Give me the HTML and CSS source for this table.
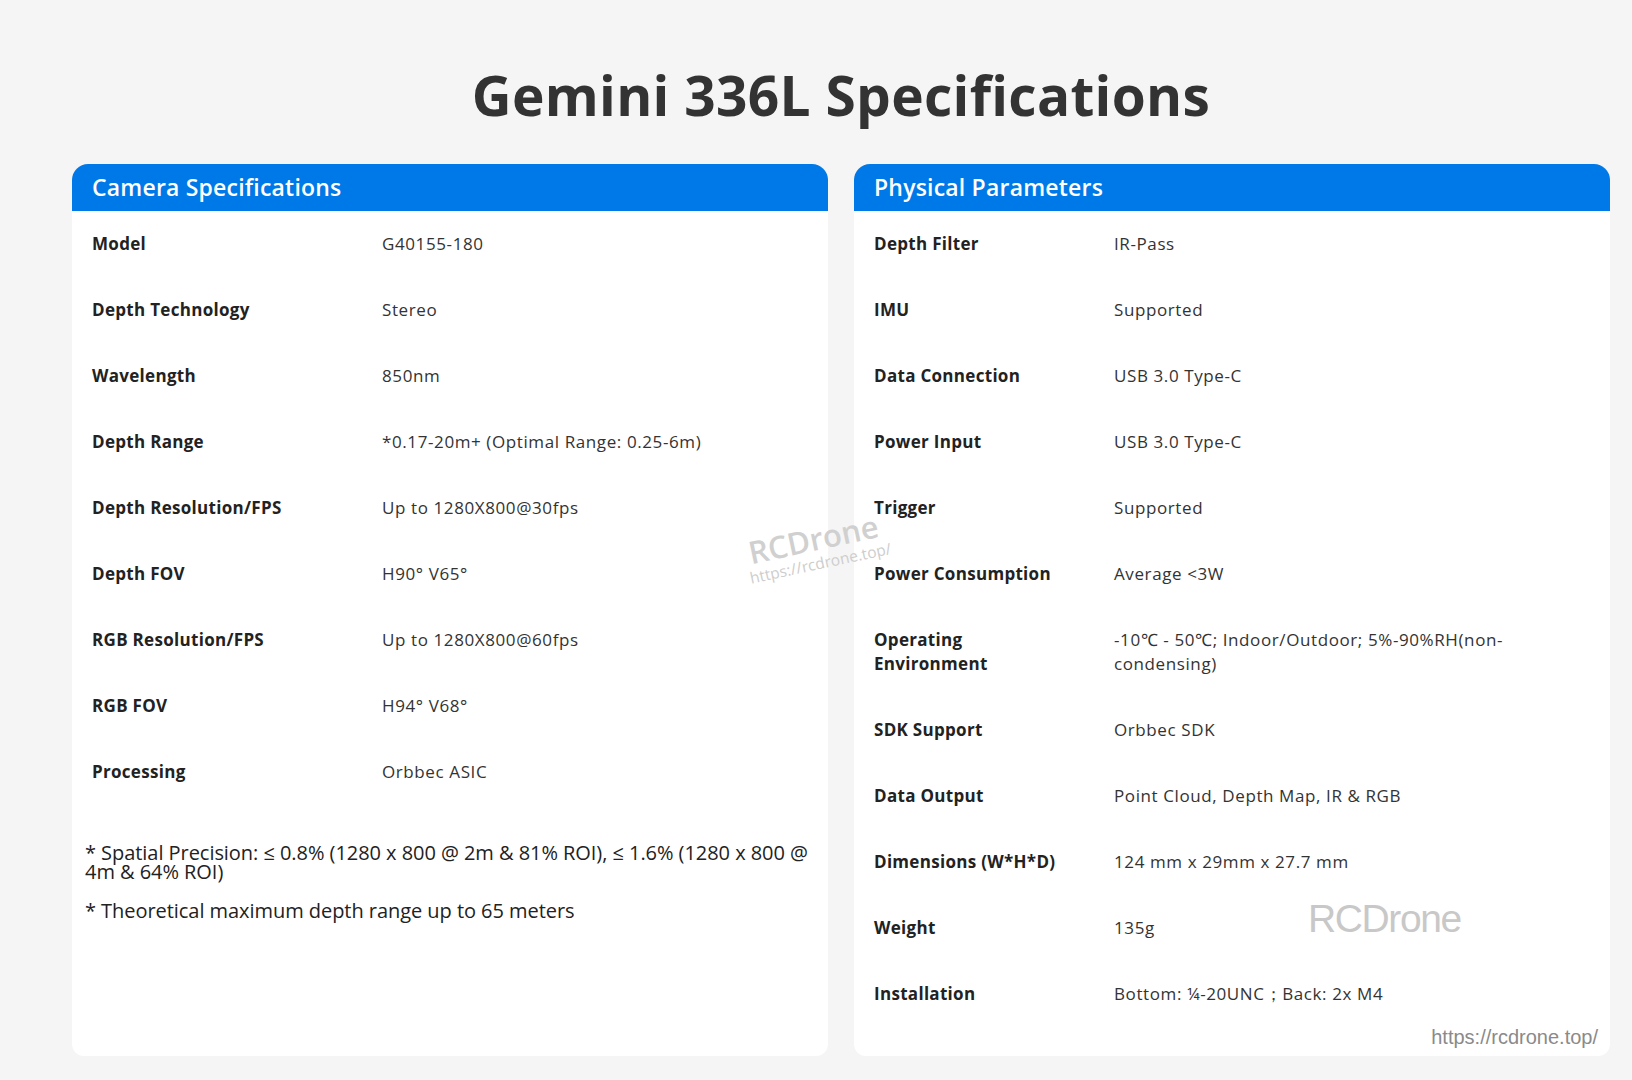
FILE: index.html
```html
<!DOCTYPE html>
<html lang="en">
<head>
<meta charset="utf-8">
<title>Gemini 336L Specifications</title>
<link rel="stylesheet" href="styles.css">
</head>
<body>
<div class="page">
  <h1 class="title">Gemini 336L Specifications</h1>
  <div class="grid">
    <section class="card">
      <h2 class="card-head">Camera Specifications</h2>
      <div class="rows rows-left">
        <div class="row"><div class="label">Model</div><div class="value">G40155-180</div></div>
        <div class="row"><div class="label">Depth Technology</div><div class="value">Stereo</div></div>
        <div class="row"><div class="label">Wavelength</div><div class="value">850nm</div></div>
        <div class="row"><div class="label">Depth Range</div><div class="value">*0.17-20m+ (Optimal Range: 0.25-6m)</div></div>
        <div class="row"><div class="label">Depth Resolution/FPS</div><div class="value">Up to 1280X800@30fps</div></div>
        <div class="row"><div class="label">Depth FOV</div><div class="value">H90° V65°</div></div>
        <div class="row"><div class="label">RGB Resolution/FPS</div><div class="value">Up to 1280X800@60fps</div></div>
        <div class="row"><div class="label">RGB FOV</div><div class="value">H94° V68°</div></div>
        <div class="row"><div class="label">Processing</div><div class="value">Orbbec ASIC</div></div>
      </div>
      <div class="notes">
        <p class="note">* Spatial Precision: ≤ 0.8% (1280 x 800 @ 2m &amp; 81% ROI), ≤ 1.6% (1280 x 800 @ 4m &amp; 64% ROI)</p>
        <p class="note">* Theoretical maximum depth range up to 65 meters</p>
      </div>
    </section>
    <section class="card">
      <h2 class="card-head">Physical Parameters</h2>
      <div class="rows rows-right">
        <div class="row"><div class="label">Depth Filter</div><div class="value">IR-Pass</div></div>
        <div class="row"><div class="label">IMU</div><div class="value">Supported</div></div>
        <div class="row"><div class="label">Data Connection</div><div class="value">USB 3.0 Type-C</div></div>
        <div class="row"><div class="label">Power Input</div><div class="value">USB 3.0 Type-C</div></div>
        <div class="row"><div class="label">Trigger</div><div class="value">Supported</div></div>
        <div class="row"><div class="label">Power Consumption</div><div class="value">Average &lt;3W</div></div>
        <div class="row"><div class="label">Operating Environment</div><div class="value">-10℃ - 50℃; Indoor/Outdoor; 5%-90%RH(non-condensing)</div></div>
        <div class="row"><div class="label">SDK Support</div><div class="value">Orbbec SDK</div></div>
        <div class="row"><div class="label">Data Output</div><div class="value">Point Cloud, Depth Map, IR &amp; RGB</div></div>
        <div class="row"><div class="label">Dimensions (W*H*D)</div><div class="value">124 mm x 29mm x 27.7 mm</div></div>
        <div class="row"><div class="label">Weight</div><div class="value">135g</div></div>
        <div class="row"><div class="label">Installation</div><div class="value">Bottom: ¼-20UNC；Back: 2x M4</div></div>
      </div>
      <div class="wm-right">RCDrone</div>
      <div class="wm-url">https://rcdrone.top/</div>
    </section>
    <div class="wm-center">
      <div class="wm-big">RCDrone</div>
      <div class="wm-small">https://rcdrone.top/</div>
    </div>
  </div>
</div>
</body>
</html>
```
FILE: styles.css
```css
* { box-sizing: border-box; }
html, body { margin: 0; padding: 0; }
body {
  background: #f5f5f5;
  font-family: "Open Sans", "Liberation Sans", sans-serif;
  color: #333;
}
.page {
  padding: 65px 22px 25px 72px;
}
.title {
  margin: 0 0 39px;
  text-align: center;
  font-size: 55px;
  line-height: 60px;
  font-weight: 700;
  color: #333;
  letter-spacing: 0.3px;
}
.grid {
  position: relative;
  display: grid;
  grid-template-columns: 1fr 1fr;
  column-gap: 26px;
}
.card {
  position: relative;
  background: #fff;
  border-radius: 16px 16px 12px 12px;
  overflow: hidden;
  padding-bottom: 29px;
}
.card-head {
  margin: 0;
  height: 47px;
  padding: 0 20px;
  background: #0079e8;
  color: #fff;
  font-size: 23px;
  font-weight: 600;
  line-height: 46px;
  letter-spacing: 0.2px;
}
.row {
  display: grid;
  padding: 21px 20px;
  font-size: 17px;
  line-height: 24px;
}
.rows-left .row { grid-template-columns: 290px 1fr; }
.rows-right .row { grid-template-columns: 240px 1fr; }
.rows-right .label { padding-right: 40px; }
.rows-right .value { padding-right: 56px; }
.label {
  font-weight: 700;
  color: #222;
  padding-right: 20px;
  letter-spacing: 0.3px;
}
.value {
  color: #333;
  letter-spacing: 0.6px;
}
.notes {
  padding: 38px 4px 0 13px;
}
.note {
  margin: 0 0 20px;
  font-size: 20px;
  line-height: 19px;
  color: #222;
  letter-spacing: -0.05px;
}
.wm-center {
  position: absolute;
  left: 743px;
  top: 383px;
  transform: translate(-50%, -50%) rotate(-12deg);
  text-align: center;
  color: #d0d0d0;
  line-height: 1.05;
  pointer-events: none;
}
.wm-big {
  font-size: 31px;
  font-weight: 600;
}
.wm-small {
  font-size: 15.5px;
  color: #cdcdcd;
  margin-left: 4px;
}
.wm-right {
  position: absolute;
  left: 454px;
  top: 733px;
  font-family: "Liberation Sans", sans-serif;
  font-size: 39px;
  color: #c8c8c8;
  letter-spacing: -1.4px;
}
.wm-url {
  position: absolute;
  right: 12px;
  bottom: 7px;
  font-family: "Liberation Sans", sans-serif;
  font-size: 20px;
  color: #8a8a8a;
}
```
